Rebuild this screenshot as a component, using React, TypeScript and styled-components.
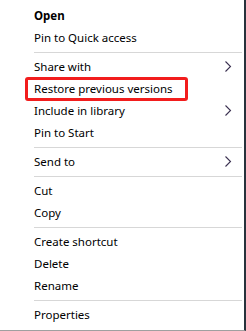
import styled, { createGlobalStyle } from 'styled-components'

const GlobalStyle = createGlobalStyle`
    html, body {
        margin: 0;
        padding: 0;
        background: #ffffff;
    }
`

const Menu = styled.div`
    box-sizing: border-box;
    width: 246px;
    height: 331px;
    padding: 5px 0 0 0;
    background: #ffffff;
    border-right: 2px solid #28323c;
    border-bottom: 1px solid #a0a0a0;
    font-family: "Noto Sans", "Open Sans", sans-serif;
    font-size: 11.5px;
    color: #000000;
`

const Row = styled.div<{ $bold?: boolean }>`
    position: relative;
    display: flex;
    align-items: center;
    height: 22px;
    padding: 0 12px 2px 34px;
    box-sizing: border-box;
    font-weight: ${p => (p.$bold ? 700 : 400)};
    white-space: nowrap;
`

const Label = styled.span`
    flex: 1;
`

const Separator = styled.div`
    height: 1px;
    margin: 3px 2px 3px 34px;
    background: #d7d7d7;
`

const Highlight = styled.div`
    position: absolute;
    left: 25px;
    top: -1px;
    width: 163px;
    height: 24px;
    box-sizing: border-box;
    border: 3px solid #f21d1d;
    border-radius: 3px;
    pointer-events: none;
`

const Chevron = () => (
    <svg width="7" height="11" viewBox="0 0 7 11">
        <polyline points="0.5,0.5 5.5,5.5 0.5,10.5" fill="none" stroke="#3a3050" strokeWidth="1.1" />
    </svg>
)

type Item = { label: string, bold?: boolean, sub?: boolean, marked?: boolean } | 'sep'

const items: Item[] = [
    { label: 'Open', bold: true },
    { label: 'Pin to Quick access' },
    'sep',
    { label: 'Share with', sub: true },
    { label: 'Restore previous versions', marked: true },
    { label: 'Include in library', sub: true },
    { label: 'Pin to Start' },
    'sep',
    { label: 'Send to', sub: true },
    'sep',
    { label: 'Cut' },
    { label: 'Copy' },
    'sep',
    { label: 'Create shortcut' },
    { label: 'Delete' },
    { label: 'Rename' },
    'sep',
    { label: 'Properties' },
]

const App = () => (
    <>
        <GlobalStyle />
        <Menu>
            {items.map((item, i) =>
                item === 'sep' ? (
                    <Separator key={i} />
                ) : (
                    <Row key={i} $bold={item.bold}>
                        <Label>{item.label}</Label>
                        {item.sub && <Chevron />}
                        {item.marked && <Highlight />}
                    </Row>
                )
            )}
        </Menu>
    </>
)

export default App
